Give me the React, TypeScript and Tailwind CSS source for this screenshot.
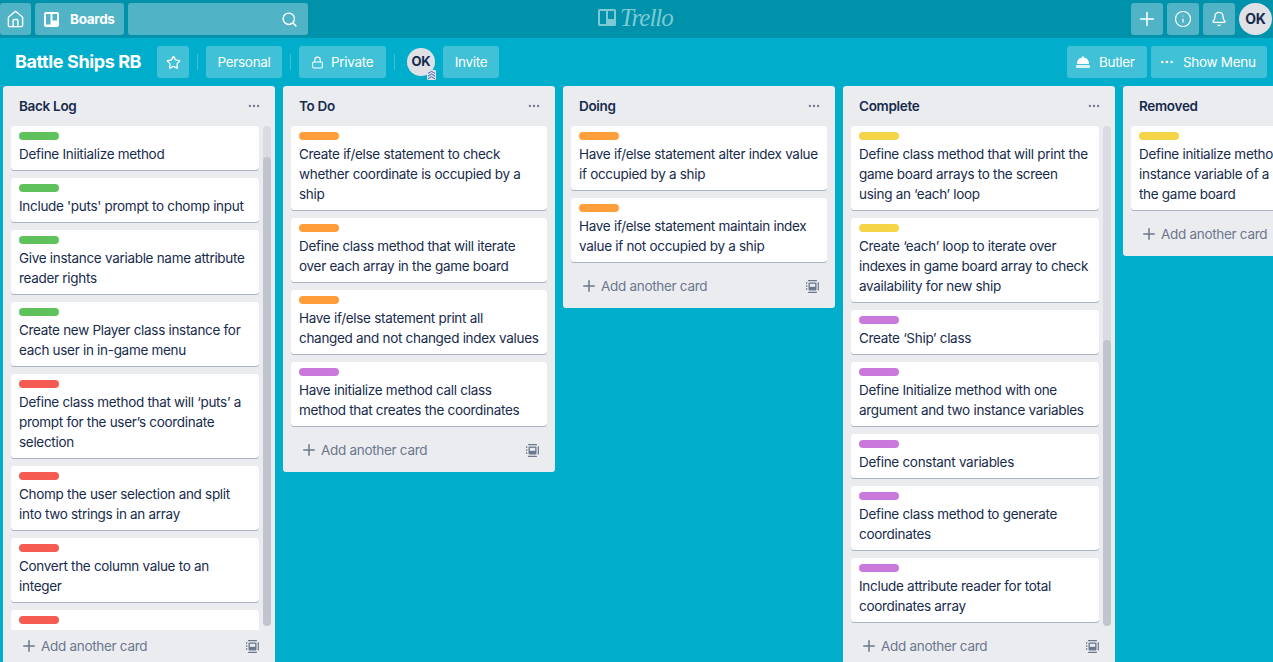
import { Bell, Ellipsis, House, Info, Lock, Plus, Search, Star } from 'lucide-react'

type Card = { label: string; lines: string[] }
type List = {
  title: string
  cards: Card[]
  thumb?: string
  full?: boolean
}

const green = 'bg-[#5fc15b]'
const orange = 'bg-[#ff9d3b]'
const red = 'bg-[#f55b50]'
const yellow = 'bg-[#f5d547]'
const purple = 'bg-[#c979dc]'

const lists: List[] = [
  {
    title: 'Back Log',
    full: true,
    thumb: 'mt-[31px]',
    cards: [
      { label: green, lines: ['Define Iniitialize method'] },
      { label: green, lines: ["Include 'puts' prompt to chomp input"] },
      { label: green, lines: ['Give instance variable name attribute', 'reader rights'] },
      { label: green, lines: ['Create new Player class instance for', 'each user in in-game menu'] },
      { label: red, lines: ['Define class method that will ‘puts’ a', 'prompt for the user’s coordinate', 'selection'] },
      { label: red, lines: ['Chomp the user selection and split', 'into two strings in an array'] },
      { label: red, lines: ['Convert the column value to an', 'integer'] },
      { label: red, lines: [] },
    ],
  },
  {
    title: 'To Do',
    cards: [
      { label: orange, lines: ['Create if/else statement to check', 'whether coordinate is occupied by a', 'ship'] },
      { label: orange, lines: ['Define class method that will iterate', 'over each array in the game board'] },
      { label: orange, lines: ['Have if/else statement print all', 'changed and not changed index values'] },
      { label: purple, lines: ['Have initialize method call class', 'method that creates the coordinates'] },
    ],
  },
  {
    title: 'Doing',
    cards: [
      { label: orange, lines: ['Have if/else statement alter index value', 'if occupied by a ship'] },
      { label: orange, lines: ['Have if/else statement maintain index', 'value if not occupied by a ship'] },
    ],
  },
  {
    title: 'Complete',
    full: true,
    thumb: 'mt-[214px]',
    cards: [
      { label: yellow, lines: ['Define class method that will print the', 'game board arrays to the screen', 'using an ‘each’ loop'] },
      { label: yellow, lines: ['Create ‘each’ loop to iterate over', 'indexes in game board array to check', 'availability for new ship'] },
      { label: purple, lines: ['Create ‘Ship’ class'] },
      { label: purple, lines: ['Define Initialize method with one', 'argument and two instance variables'] },
      { label: purple, lines: ['Define constant variables'] },
      { label: purple, lines: ['Define class method to generate', 'coordinates'] },
      { label: purple, lines: ['Include attribute reader for total', 'coordinates array'] },
    ],
  },
  {
    title: 'Removed',
    cards: [
      { label: yellow, lines: ['Define initialize method with an', 'instance variable of a blank', 'the game board'] },
    ],
  },
]

const CardTemplateIcon = () => (
  <svg width="13" height="13" viewBox="0 0 13 13" fill="none" className="text-[#6b778c]">
    <path d="M2.5 .7h8M.7 2.5v1M.7 5.5v1M.7 8.5v1M12.3 2.5v7.5M2.5 12.3h8" stroke="currentColor" strokeWidth="1.2" strokeLinecap="round" />
    <rect x="2.5" y="2.5" width="8" height="8" rx="1" fill="currentColor" />
    <rect x="3.8" y="3.8" width="5.4" height="3" fill="#ebecf0" />
  </svg>
)

const BoardsIcon = () => (
  <svg width="15" height="15" viewBox="0 0 15 15">
    <rect width="15" height="15" rx="2" fill="#fff" />
    <rect x="2" y="2" width="4.5" height="10.5" fill="#50b4c6" />
    <rect x="8.5" y="2" width="4.5" height="6.5" fill="#50b4c6" />
  </svg>
)

const ButlerIcon = () => (
  <svg width="16" height="16" viewBox="0 0 16 16" fill="#fff">
    <path d="M7.4 2.4a.6.6 0 1 1 1.2 0v1a5.6 5.6 0 0 1 5.2 6.6H2.2a5.6 5.6 0 0 1 5.2-6.6z" />
    <rect x="1" y="11" width="14" height="3" rx="1" opacity=".8" />
  </svg>
)

const TopButton = ({ children, className = '' }: { children: React.ReactNode; className?: string }) => (
  <div className={`h-8 flex items-center rounded-[3px] bg-[#50b4c6] text-white ${className}`}>{children}</div>
)

const BarButton = ({ children, className = '' }: { children: React.ReactNode; className?: string }) => (
  <div className={`h-8 flex items-center rounded-[3px] bg-[#40c1d8] text-white text-[13.5px] ${className}`}>{children}</div>
)

const Divider = () => <div className="w-px h-4 mx-2 bg-[#40c1d8]" />

const CardItem = ({ card }: { card: Card }) => (
  <div className="shrink-0 bg-white rounded-[3px] shadow-[0_1px_0_#a9b2c2] px-2 pt-1.5 pb-1.5 mb-2">
    <div className={`w-10 h-2 rounded mb-1 ${card.label}`} />
    {card.lines.map((line) => (
      <div key={line} className="text-[13.5px] leading-5 text-[#172b4d] whitespace-nowrap">
        {line}
      </div>
    ))}
  </div>
)

const ListColumn = ({ list }: { list: List }) => (
  <div className={`w-[272px] shrink-0 flex flex-col bg-[#ebecf0] rounded-[3px] ${list.full ? 'h-[582px]' : ''}`}>
    <div className="h-10 shrink-0 flex items-center justify-between pl-4 pr-3.5">
      <span className="text-[13.5px] font-semibold text-[#172b4d]">{list.title}</span>
      <Ellipsis size={14} className="text-[#6b778c]" />
    </div>
    <div className={`flex min-h-0 pl-2 ${list.full ? 'flex-1 pr-1' : 'pr-2'}`}>
      <div className="flex-1 min-w-0 overflow-hidden flex flex-col">
        {list.cards.map((card, index) => (
          <CardItem key={index} card={card} />
        ))}
      </div>
      {list.full && (
        <div className="w-2 ml-1 mb-1 rounded bg-[#dadbe2] flex flex-col">
          <div className={`flex-1 rounded bg-[#bfc4cd] ${list.thumb}`} />
        </div>
      )}
    </div>
    <div className="h-8 mb-1.5 shrink-0 flex items-center justify-between pl-[17px] pr-4 text-[13.5px] text-[#6b778c]">
      <div className="flex items-center gap-[3px]">
        <Plus size={18} />
        <span>Add another card</span>
      </div>
      <CardTemplateIcon />
    </div>
  </div>
)

export default function App() {
  return (
    <div className="w-[1273px] h-[662px] overflow-hidden flex flex-col bg-[#00aecc] tracking-[-0.3px] font-['Inter',sans-serif]">
      <header className="relative h-[38px] shrink-0 flex items-center bg-[#0092aa] gap-1">
        <TopButton className="w-[31px] justify-center">
          <House size={19} strokeWidth={1.8} />
        </TopButton>
        <TopButton className="w-[89px] pl-[9px]">
          <BoardsIcon />
          <span className="ml-[11px] text-[13.5px] font-bold">Boards</span>
        </TopButton>
        <TopButton className="w-[180px] justify-end pr-2.5">
          <Search size={17} />
        </TopButton>
        <div className="absolute left-[598px] top-[9px] flex items-center gap-1 text-[#7fc9d4]">
          <svg width="18" height="17" viewBox="0 0 18 17">
            <rect width="18" height="17" rx="1.5" fill="#7fc9d4" />
            <rect x="2" y="2" width="6" height="13" fill="#0092aa" />
            <rect x="10" y="2" width="6" height="8" fill="#0092aa" />
          </svg>
          <span className="text-[25px] leading-4 italic tracking-[-1px] font-['Liberation_Serif',serif]">Trello</span>
        </div>
        <div className="ml-auto flex items-center gap-1 pr-px">
          <TopButton className="w-8 justify-center">
            <Plus size={22} strokeWidth={1.7} />
          </TopButton>
          <TopButton className="w-8 justify-center">
            <Info size={18} strokeWidth={1.6} />
          </TopButton>
          <TopButton className="w-8 justify-center">
            <Bell size={16} />
          </TopButton>
          <div className="w-[33px] h-8 rounded-full bg-[#dfe1e6] flex items-center justify-center text-sm font-bold text-[#172b4d]">
            OK
          </div>
        </div>
      </header>

      <div className="h-12 shrink-0 flex items-center pl-[15px] pr-1.5">
        <h1 className="text-lg font-bold text-white w-[142px] tracking-[-0.4px] whitespace-nowrap">Battle Ships RB</h1>
        <BarButton className="w-8 justify-center">
          <Star size={15} />
        </BarButton>
        <Divider />
        <BarButton className="w-[76px] justify-center">Personal</BarButton>
        <Divider />
        <BarButton className="w-[87px] pl-3">
          <Lock size={13} />
          <span className="ml-[7px]">Private</span>
        </BarButton>
        <Divider />
        <div className="relative ml-1 w-7 h-7 rounded-full bg-[#dfe1e6] flex items-center justify-center text-[13px] font-bold text-[#172b4d]">
          OK
          <svg width="9" height="10" viewBox="0 0 9 10" className="absolute -right-px -bottom-1" fill="none">
            <rect width="9" height="10" rx="1" fill="#dfe1e6" />
            <path d="M1 3.5l3.5-2.2L8 3.5M1 6.2l3.5-2.2L8 6.2M1 8.9l3.5-2.2L8 8.9" stroke="#3f62c4" strokeWidth="1" />
          </svg>
        </div>
        <BarButton className="w-14 justify-center ml-2">Invite</BarButton>
        <BarButton className="w-20 pl-2 gap-2 ml-auto">
          <ButlerIcon />
          <span>Butler</span>
        </BarButton>
        <BarButton className="w-[116px] pl-2 gap-2 ml-1">
          <Ellipsis size={16} />
          <span>Show Menu</span>
        </BarButton>
      </div>

      <main className="flex-1 min-h-0 flex items-start gap-2 pl-[3px] overflow-hidden">
        {lists.map((list) => (
          <ListColumn key={list.title} list={list} />
        ))}
      </main>
    </div>
  )
}
